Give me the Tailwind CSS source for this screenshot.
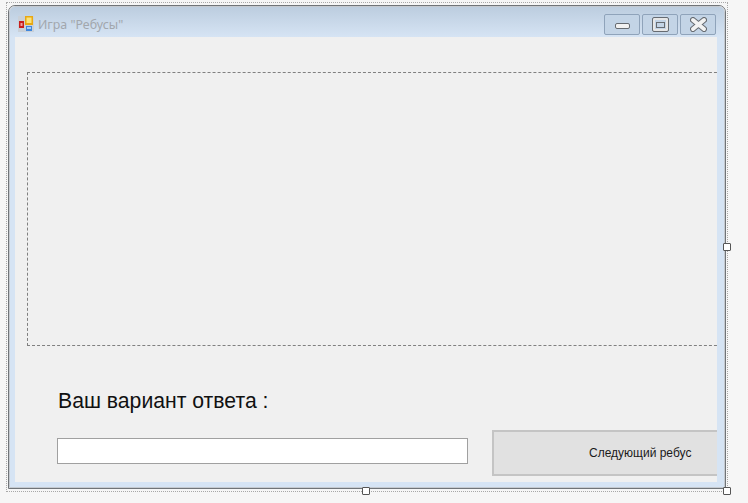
<!DOCTYPE html>
<html lang="en">
<head>
    <meta charset="UTF-8">
    <title>Игра "Ребусы"</title>
    <script src="https://cdn.jsdelivr.net/npm/@tailwindcss/browser@4"></script>
</head>
<body class="bg-[#f6f6f6] overflow-hidden font-['Liberation_Sans',sans-serif]">
    <div class="w-[748px] h-[503px] pl-[6px] pt-[2px]">
        <!-- designer selection frame -->
        <div class="relative w-[722px] h-[490px] border border-dotted border-[#a8a8a8] pl-[1px] pt-[2px]">
            <!-- window -->
            <div class="w-[718px] h-[484px] border border-[#707478] rounded-t-[7px] overflow-hidden">
                <div class="h-full flex flex-col border border-[#c5cad0] rounded-t-[6px] bg-[#d6e4f4] overflow-hidden">
                    <!-- title bar -->
                    <div class="h-[30px] shrink-0 flex bg-gradient-to-b from-[#bccddf] to-[#d6e4f4] pl-[8px] pr-[8px]">
                        <svg class="mt-[9px] w-[16px] h-[16px]" viewBox="0 0 16 16">
                            <rect x="0" y="0" width="16" height="16" fill="#c9d0d8"/>
                            <rect x="1" y="5" width="5" height="7" fill="#c81e1e"/>
                            <rect x="2.5" y="7" width="2" height="3" fill="#f0a0a0"/>
                            <rect x="7" y="0" width="8" height="9" fill="#e8a812"/>
                            <rect x="8.5" y="1.5" width="5" height="5.5" fill="#fbe27a"/>
                            <rect x="8" y="10" width="6" height="5" fill="#3f86dc"/>
                            <rect x="9" y="11" width="4" height="2" fill="#a9cdf5"/>
                        </svg>
                        <span class="ml-[4px] mt-[10px] text-[12.4px] leading-[16px] text-[#a2a7ad] font-['Noto_Sans',sans-serif]">Игра "Ребусы"</span>
                        <div class="ml-auto mt-[7px] flex gap-[2px] h-[21px]">
                            <div class="w-[36px] flex items-center justify-center rounded-[2px] border border-[#8fa3ba] bg-[#c3d4e6]">
                                <div class="w-[15px] h-[6px] mt-[2px] rounded-[2px] border border-[#666b71] bg-[#f2f2f2]"></div>
                            </div>
                            <div class="w-[36px] flex items-center justify-center rounded-[2px] border border-[#8fa3ba] bg-[#c3d4e6]">
                                <div class="w-[15px] h-[13px] rounded-[1px] border-2 border-[#e6e6e6] outline outline-[#666b71] flex items-center justify-center">
                                    <div class="w-[9px] h-[6px] border border-[#666b71] bg-[#c3d4e6]"></div>
                                </div>
                            </div>
                            <div class="w-[36px] flex items-center justify-center rounded-[2px] border border-[#8fa3ba] bg-[#c3d4e6]">
                                <svg class="w-[17px] h-[15px]" viewBox="0 0 17 15">
                                    <path d="M3 3 L14 12 M14 3 L3 12" stroke="#666b71" stroke-width="6" stroke-linecap="round"/>
                                    <path d="M3 3 L14 12 M14 3 L3 12" stroke="#f2f2f2" stroke-width="4" stroke-linecap="round"/>
                                </svg>
                            </div>
                        </div>
                    </div>
                    <!-- client area -->
                    <div class="ml-[5px] w-[702px] h-[445px] bg-[#f0f0f0] overflow-hidden">
                        <div class="ml-[12px] mt-[35px] w-[710px] h-[274px] border border-dashed border-[#808080]"></div>
                        <div class="ml-[43px] mt-[43px] text-[21.2px] leading-[24px] text-[#111]">Ваш вариант ответа :</div>
                        <div class="flex items-start mt-[17px] pl-[42px]">
                            <div class="w-[411px] h-[26px] mt-[8px] shrink-0 bg-white border border-[#a0a0a0]"></div>
                            <div class="ml-[24px] w-[240px] h-[46px] shrink-0 bg-[#e1e1e1] border-2 border-[#c4c4c4] flex items-center pl-[95px] text-[12px] text-[#1a1a1a]">Следующий ребус</div>
                        </div>
                    </div>
                </div>
            </div>
            <!-- resize handles -->
            <div class="absolute left-[355px] top-[484px] w-[8px] h-[8px] bg-white border border-[#555] rounded-[1px]"></div>
            <div class="absolute left-[716px] top-[484px] w-[8px] h-[8px] bg-white border border-[#555] rounded-[1px]"></div>
            <div class="absolute left-[716px] top-[240px] w-[8px] h-[8px] bg-white border border-[#555] rounded-[1px]"></div>
        </div>
    </div>
</body>
</html>
